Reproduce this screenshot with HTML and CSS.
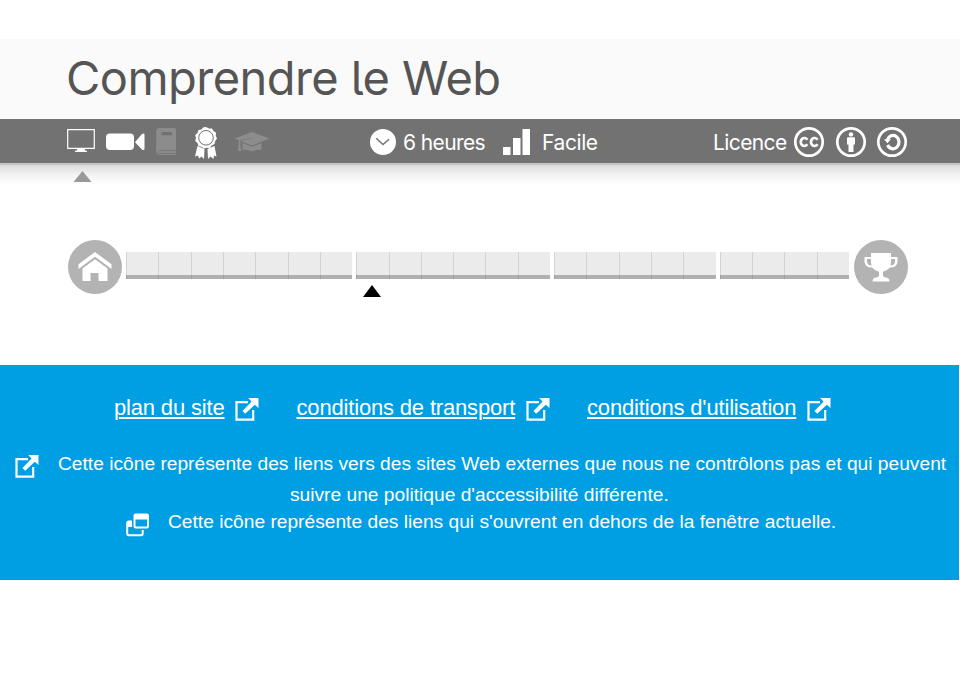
FILE: index.html
```html
<!DOCTYPE html>
<html lang="fr">
<head>
<meta charset="utf-8">
<title>Comprendre le Web</title>
<link rel="stylesheet" href="styles.css">
</head>
<body>
<svg class="defs" width="0" height="0" aria-hidden="true">
  <symbol id="external" viewBox="0 0 24 24">
    <path d="M13 4.200H1.500V21.700H18.200V12" fill="none" stroke="currentColor" stroke-width="2.200"/>
    <path d="M13.200 0H23.500V10L19.800 6.700 10.200 15.800 7.500 13.100 16.600 3.500Z" fill="currentColor"/>
  </symbol>
</svg>
<header>
  <div class="title"><h1>Comprendre le Web</h1></div>
  <div class="bar">
    <div class="modes">
      <svg width="28" height="26" viewBox="0 0 28 26"><path d="M.7 1.700H27.300V20.300H.7Z" fill="none" stroke="#fff" stroke-width="1.200"/><path d="M10.500 20H17.500L18 22.300 20 23V24H8V23L10 22.300Z" fill="#fff"/></svg>
      <svg class="video" width="39" height="26" viewBox="0 0 39 26"><rect y="5.500" width="28" height="16.500" rx="4" fill="#fff"/><path d="M29 14.200 35.500 6.500Q38.500 4.500 38.500 7V20.500Q38.500 23 36 21.500Z" fill="#fff"/></svg>
      <svg class="book" width="22" height="28" viewBox="0 0 22 28"><path d="M4 0H18.500Q20 0 20 1.500V21Q20 22.200 19.500 22.500V25.500L20.500 26V27H4Q.2 27 .2 23.500V3Q.2 0 4 0Z" fill="#8c8c8c"/><path d="M5.500 4H16V7.200H5.500Z" fill="#727272"/><path d="M19.500 22.500H3.500Q1.800 23 2 25.500H19.500" fill="none" stroke="#727272" stroke-width=".8"/></svg>
      <svg class="award" width="24" height="34" viewBox="0 0 24 34"><path d="M3.500 19 10.500 22 10 32 7.500 29.500 5 31.500 4 28.500 1 29.500ZM20.500 19 13.500 22 14 32 16.500 29.500 19.500 32 20 28.500 22.500 29.500Z" fill="#fff"/><path d="M12 0 15 1.400 18 1.500 19.500 4 22 5.700 21.800 8.800 23 11.500 21.200 14 20.500 17 17.800 18.400 16 21 13 20.700 10 21.600 7.500 19.700 4.500 19 3.500 16 1.200 14 2 11 1.200 8 3.500 6 4.500 3 7.500 2.400 9 .6Z" fill="#fff"/><circle cx="12" cy="10.800" r="7.300" fill="none" stroke="#727272" stroke-width="1"/></svg>
      <svg class="cap" width="36" height="21" viewBox="0 0 36 21"><path d="M18 0 35.500 6.500 18 13.500 6.500 9V13L7.500 19H4L4.700 12V8.300L.3 6.500ZM8.500 11 18 14.700 27.500 11V18Q23 17 18 19.500 13 17 8.500 18Z" fill="#8c8c8c"/><path d="M18 6.200 6 8.500" stroke="#7d7d7d"/></svg>
    </div>
    <div class="info">
      <svg width="26" height="26" viewBox="0 0 26 26"><circle cx="13" cy="13" r="13" fill="#fff"/><path d="M6.200 9.300 13 15.500 19 10.200" fill="none" stroke="#727272" stroke-width="1.500"/></svg>
      <span class="hours">6 heures</span>
      <svg class="level" width="27" height="26" viewBox="0 0 27 26"><path d="M0 18H7.500V26H0ZM10 9H17.500V26H10ZM19.500 0H27V26H19.500Z" fill="#fff"/></svg>
      <span class="easy">Facile</span>
    </div>
    <div class="licence">
      <span class="lic">Licence</span>
      <svg width="32" height="32" viewBox="0 0 32 32" fill="none" stroke="#fff"><circle cx="16" cy="16" r="13.700" stroke-width="2.700"/><path d="M14.300 13.700A3.600 4 0 1 0 14.300 18.300M24.500 13.700A3.600 4 0 1 0 24.500 18.300" stroke-width="2.700"/></svg>
      <svg width="32" height="32" viewBox="0 0 32 32"><circle cx="16" cy="16" r="13.700" fill="none" stroke="#fff" stroke-width="2.700"/><circle cx="16" cy="8.400" r="2.200" fill="#fff"/><path d="M13 11.300H19Q20 11.300 20 12.300V18.500H18.500V26H13.500V18.500H12V12.300Q12 11.300 13 11.300Z" fill="#fff"/></svg>
      <svg width="32" height="32" viewBox="0 0 32 32" fill="none" stroke="#fff"><circle cx="16" cy="16" r="13.700" stroke-width="2.700"/><path d="M11.300 14A6 6.700 0 1 1 11.600 19" stroke-width="3.200"/><path d="M8 13.300H15L11.400 17.300Z" fill="#fff" stroke="none"/></svg>
    </div>
  </div>
  <div class="shade"><svg width="21" height="15" viewBox="0 0 21 15"><path d="M1.500 13 10.500 2 19.500 13Z" fill="#999"/></svg></div>
</header>
<main>
  <div class="round"><svg width="34" height="30" viewBox="0 0 34 30"><path d="M.5 12.200 17 0 33.500 12.200V17L17 4.800.5 17Z" fill="#fff"/><path d="M4.500 16.500 17 7.200 29.500 16.500V29H20.500V21H12.500V29H4.500Z" fill="#fff"/></svg></div>
  <div class="track">
    <div class="group g7"><i></i><i></i><i></i><i></i><i></i><i></i><i></i></div>
    <div class="group g6"><i class="current"></i><i></i><i></i><i></i><i></i><i></i></div>
    <div class="group g5"><i></i><i></i><i></i><i></i><i></i></div>
    <div class="group g4"><i></i><i></i><i></i><i></i></div>
  </div>
  <div class="round trophy"><svg width="34" height="30" viewBox="0 0 34 30"><path d="M7 0H27V4H33.500V9Q33 14.500 26 14.500 22.500 18 19 18.800V23Q20 24.500 24 25 25.500 26 25.500 28.500H8.500Q8.500 26 10 25 14 24.500 15 23V18.800Q11.500 18 8 14.500 1 14.500.5 9V4H7ZM7 6H3V9Q3.500 12 7.500 12.700Q6.700 10 7 6ZM27 6Q27.300 10 26.500 12.700 30.500 12 31 9V6Z" fill="#fff" fill-rule="evenodd"/></svg></div>
</main>
<footer>
  <nav>
    <a class="l1" href="#">plan du site</a><svg width="24" height="24"><use href="#external"/></svg>
    <a class="l2" href="#">conditions de transport</a><svg width="24" height="24"><use href="#external"/></svg>
    <a class="l3" href="#">conditions d'utilisation</a><svg width="24" height="24"><use href="#external"/></svg>
  </nav>
  <div class="note first"><svg width="24" height="24"><use href="#external"/></svg><p>Cette icône représente des liens vers des sites Web externes que nous ne contrôlons pas et qui peuvent</p></div>
  <p class="second">suivre une politique d'accessibilité différente.</p>
  <div class="note third"><svg width="23" height="24" viewBox="0 0 23 24"><path d="M6 8.500H3Q1.200 8.500 1.200 10V20.500Q1.200 22.200 3 22.200H15Q16.700 22.200 16.700 20.500V17" fill="none" stroke="#fff" stroke-width="2"/><path d="M1 8H6V14H1Z" fill="#fff"/><rect x="8.500" y="1.500" width="13.500" height="13" rx="1.200" fill="none" stroke="#fff" stroke-width="2"/><path d="M8 1H22V6.500H8Z" fill="#fff"/></svg><p>Cette icône représente des liens qui s'ouvrent en dehors de la fenêtre actuelle.</p></div>
</footer>
</body>
</html>
```
FILE: styles.css
```css
* { box-sizing: border-box; }
body { margin: 0; padding-top: 39px; background: #fff; font-family: "Liberation Sans", Arial, sans-serif; overflow: hidden; }
svg { display: block; flex: none; }
.defs { position: absolute; }
h1, p { margin: 0; font-weight: 400; }
.title { height: 80px; padding-left: 66px; background: #fafafa; }
h1 { font: 400 47px/78px Inter, sans-serif; color: #555; font-feature-settings: "cv05"; letter-spacing: -0.55px; white-space: nowrap; }
.bar { height: 44px; padding-left: 67px; background: #727272; display: grid; grid-template-columns: 303px 343px 1fr; color: #fff; font: 400 21px/44px Inter, sans-serif; white-space: nowrap; }
.bar span { padding-top: 2px; letter-spacing: -0.6px; }
.modes { display: flex; align-items: flex-start; padding-top: 9px; }
.video { margin-left: 11px; }
.book { margin-left: 11px; }
.award { margin: -1px 0 0 16px; }
.cap { margin: 4px 0 0 16px; }
.info { display: flex; align-items: center; }
.hours { width: 81px; margin-left: 7px; }
.level { margin: -1px 0 0 19px; }
.bar .easy { margin-left: 12px; letter-spacing: -0.4px; }
.licence { display: flex; align-items: center; gap: 9.5px; }
.licence svg { margin-top: -1px; }
.lic { width: 74px; margin-right: -3.5px; }
.shade { height: 22px; padding: 4px 0 0 72px; border-top: 2px solid #c3c3c3; background: linear-gradient(#dadada, #f2f2f2 45%, #fff); }
main { height: 54px; margin: 55px 52px 0 68px; display: flex; align-items: center; }
.round { width: 54px; height: 54px; border-radius: 50%; background: #b3b3b3; display: flex; align-items: center; justify-content: center; flex: none; }
.round svg { margin-left: -1px; }
.trophy svg { margin-top: 1px; }
.track { width: 723px; margin: -3px 5px 0 4px; height: 27px; display: flex; gap: 4px; }
.group { display: flex; min-width: 0; }
.g7 { flex: 7 0 0; }
.g6 { flex: 6 0 0; }
.g5 { flex: 5 0 0; }
.g4 { flex: 4 0 0; }
.group i { flex: 1; position: relative; background: linear-gradient(#ebebeb 23px, #b0b0b0 23px); box-shadow: inset 1px 0 rgba(0, 0, 0, .1); }
.current::after { content: ""; position: absolute; left: 7px; top: 33px; border: solid transparent; border-width: 0 9px 12px; border-bottom-color: #000; }
footer { width: 959px; height: 215px; margin-top: 71px; padding-top: 27px; background: #009fe3; color: #fff; }
nav { height: 32px; padding-left: 114px; display: flex; font-size: 22px; line-height: 32px; letter-spacing: -0.17px; white-space: nowrap; }
nav a { color: #fff; text-decoration-thickness: 2px; text-underline-offset: 2px; }
nav svg { margin: 6px 37.5px 0 10px; }
.l1 { width: 111px; }
.l2 { width: 219px; }
.l3 { width: 210px; }
.note { display: flex; font-size: 19.2px; line-height: 31px; white-space: nowrap; }
.first { margin-top: 24px; padding-left: 15px; }
.first svg { margin: 7px 19px 0 0; }
.second { padding-left: 290px; font-size: 19.2px; line-height: 31px; }
.third { padding-left: 126px; margin-top: -4px; }
.third svg { margin: 7px 19px 0 0; }
```
